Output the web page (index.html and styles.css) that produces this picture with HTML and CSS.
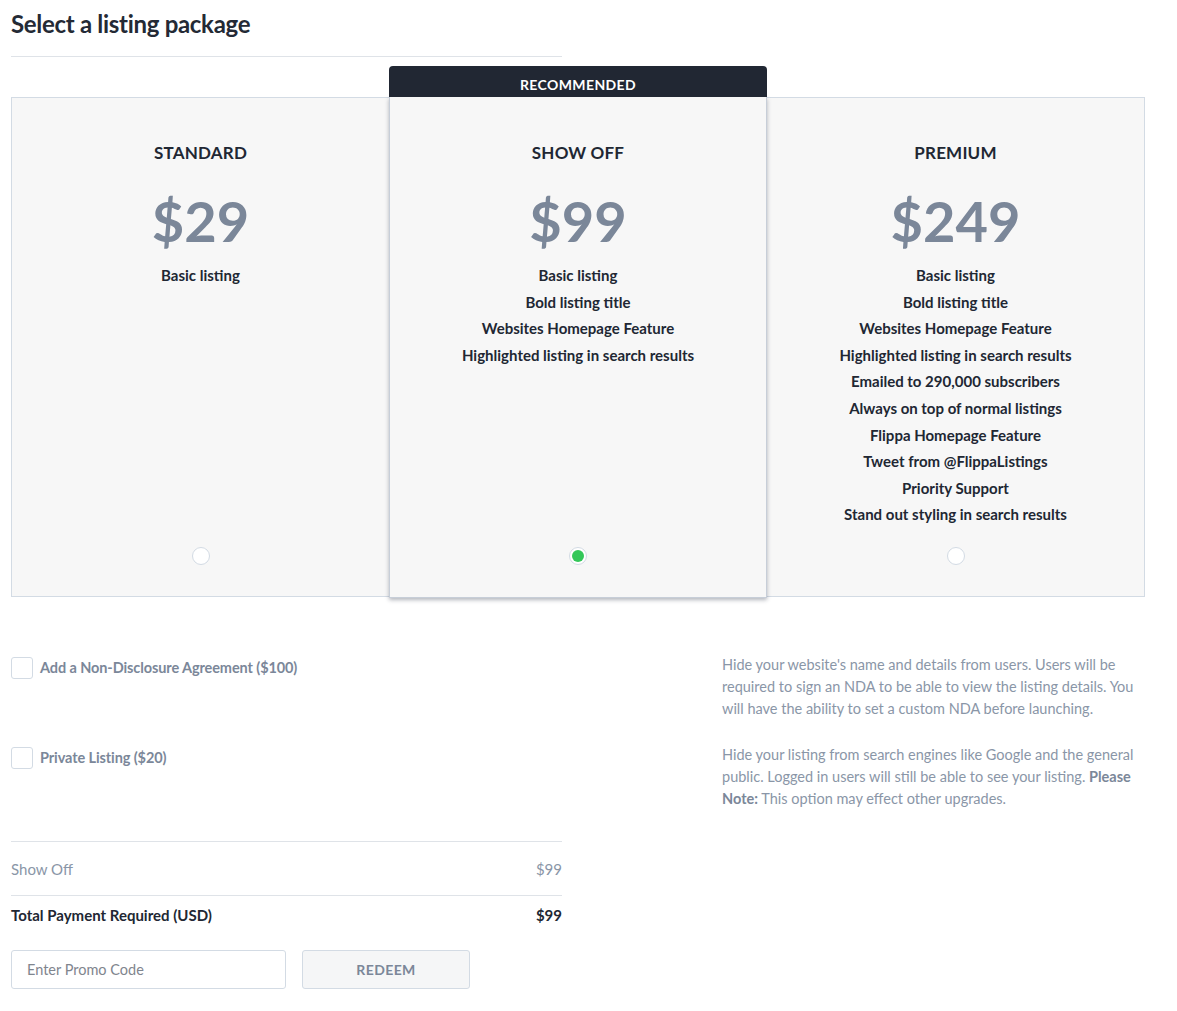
FILE: index.html
```html
<!DOCTYPE html>
<html>
<head>
<meta charset="utf-8">
<link rel="stylesheet" href="styles.css">
</head>
<body>
<div class="page">
  <h1 class="title">Select a listing package</h1>
  <div class="title-rule"></div>

  <div class="plans">
    <div class="plan">
      <div class="plan-name">STANDARD</div>
      <div class="plan-price">$29</div>
      <ul class="features">
        <li>Basic listing</li>
      </ul>
      <span class="radio"></span>
    </div>
    <div class="plan plan-featured">
      <div class="badge">RECOMMENDED</div>
      <div class="plan-name">SHOW OFF</div>
      <div class="plan-price">$99</div>
      <ul class="features">
        <li>Basic listing</li>
        <li>Bold listing title</li>
        <li>Websites Homepage Feature</li>
        <li>Highlighted listing in search results</li>
      </ul>
      <span class="radio radio-on"></span>
    </div>
    <div class="plan">
      <div class="plan-name">PREMIUM</div>
      <div class="plan-price">$249</div>
      <ul class="features">
        <li>Basic listing</li>
        <li>Bold listing title</li>
        <li>Websites Homepage Feature</li>
        <li>Highlighted listing in search results</li>
        <li>Emailed to 290,000 subscribers</li>
        <li>Always on top of normal listings</li>
        <li>Flippa Homepage Feature</li>
        <li>Tweet from @FlippaListings</li>
        <li>Priority Support</li>
        <li>Stand out styling in search results</li>
      </ul>
      <span class="radio"></span>
    </div>
  </div>

  <div class="extras">
    <div class="extra">
      <label class="check"><span class="box"></span><span class="check-label">Add a Non-Disclosure Agreement ($100)</span></label>
      <p class="extra-desc">Hide your website's name and details from users. Users will be required to sign an NDA to be able to view the listing details. You will have the ability to set a custom NDA before launching.</p>
    </div>
    <div class="extra">
      <label class="check"><span class="box"></span><span class="check-label">Private Listing ($20)</span></label>
      <p class="extra-desc">Hide your listing from search engines like Google and the general public. Logged in users will still be able to see your listing. <strong>Please Note:</strong> This option may effect other upgrades.</p>
    </div>
  </div>

  <div class="summary">
    <div class="row row-item"><span>Show Off</span><span>$99</span></div>
    <div class="row row-total"><span>Total Payment Required (USD)</span><span>$99</span></div>
  </div>

  <div class="promo">
    <input class="promo-input" type="text" placeholder="Enter Promo Code">
    <button class="redeem">REDEEM</button>
  </div>
</div>
</body>
</html>
```

FILE: styles.css
```css
* { box-sizing: border-box; }
body {
  margin: 0;
  background: #fff;
  font-family: Lato, "Open Sans", sans-serif;
  color: #212733;
}
.page {
  padding: 8px 32px 0 11px;
}
.title {
  margin: 0;
  font-size: 24px;
  line-height: 32px;
  font-weight: 700;
  color: #242a35;
  letter-spacing: -0.3px;
}
.title-rule {
  width: 551px;
  height: 1px;
  background: #dfe3e8;
  margin-top: 16px;
}
.plans {
  margin-top: 40px;
  display: grid;
  grid-template-columns: repeat(3, 378px);
  width: 1134px;
}
.plan {
  position: relative;
  height: 500px;
  background: #f7f7f7;
  border: 1px solid #d3dbe4;
  display: flex;
  flex-direction: column;
  align-items: center;
  padding: 45px 0 31px;
}
.plan:first-child { border-right: none; }
.plan:last-child { border-left: none; }
.plan-featured {
  height: 501px;
  border: 1px solid #c7ced8;
  border-top: none;
  box-shadow: 0 2px 4px rgba(40, 50, 70, 0.35);
  z-index: 1;
  padding-top: 46px;
  padding-bottom: 32px;
}
.badge {
  position: absolute;
  left: -1px;
  right: -1px;
  bottom: 100%;
  height: 31px;
  background: #212733;
  color: #fff;
  border-radius: 4px 4px 0 0;
  font-size: 14px;
  font-weight: 700;
  letter-spacing: 0.4px;
  text-align: center;
  line-height: 37px;
}
.plan-name {
  font-size: 17px;
  line-height: 20px;
  font-weight: 700;
  letter-spacing: 0.2px;
  color: #212733;
}
.plan-price {
  margin-top: 26px;
  font-size: 56px;
  line-height: 64px;
  font-weight: 700;
  color: #7b8799;
}
.features {
  list-style: none;
  margin: 9px 0 0;
  padding: 0;
  text-align: center;
}
.features li {
  font-size: 15px;
  line-height: 26.6px;
  font-weight: 700;
  color: #212733;
}
.radio {
  margin-top: auto;
  width: 18px;
  height: 18px;
  border-radius: 50%;
  border: 1px solid #d3dbe4;
  background: #fff;
  display: flex;
  align-items: center;
  justify-content: center;
}
.radio-on::after {
  content: "";
  width: 12px;
  height: 12px;
  border-radius: 50%;
  background: #34c759;
}
.extras {
  margin-top: 59px;
  display: flex;
  flex-direction: column;
  gap: 24px;
}
.extra {
  display: grid;
  grid-template-columns: 711px 420px;
}
.check {
  display: flex;
  align-items: flex-start;
  gap: 7px;
  height: 66px;
}
.box {
  width: 22px;
  height: 22px;
  border: 1px solid #d3dbe4;
  border-radius: 3px;
  background: #fff;
  flex: none;
}
.check-label {
  font-size: 14.5px;
  line-height: 21px;
  font-weight: 700;
  color: #7b8799;
  letter-spacing: -0.1px;
}
.extra-desc {
  margin: -3px 0 0;
  font-size: 14.5px;
  line-height: 22px;
  color: #8a96a7;
}
.extra-desc strong { font-weight: 700; color: #7b8799; }
.summary {
  width: 551px;
  margin-top: 28px;
  border-top: 1px solid #dfe3e8;
}
.row {
  display: flex;
  justify-content: space-between;
  align-items: center;
}
.row-item {
  height: 54px;
  border-bottom: 1px solid #dfe3e8;
  font-size: 15px;
  color: #8a96a7;
}
.row-total {
  height: 38px;
  font-size: 15px;
  font-weight: 700;
  color: #212733;
}
.promo {
  margin-top: 16px;
  display: flex;
  gap: 16px;
}
.promo-input {
  width: 275px;
  height: 39px;
  border: 1px solid #d3dbe4;
  border-radius: 3px;
  padding: 0 15px;
  font-family: inherit;
  font-size: 14.5px;
  color: #212733;
  outline: none;
}
.promo-input::placeholder { color: #7f858e; }
.redeem {
  width: 168px;
  height: 39px;
  border: 1px solid #d3dbe4;
  border-radius: 3px;
  background: #f5f6f7;
  font-family: inherit;
  font-size: 14px;
  font-weight: 700;
  letter-spacing: 0.4px;
  color: #7b8799;
}
```
